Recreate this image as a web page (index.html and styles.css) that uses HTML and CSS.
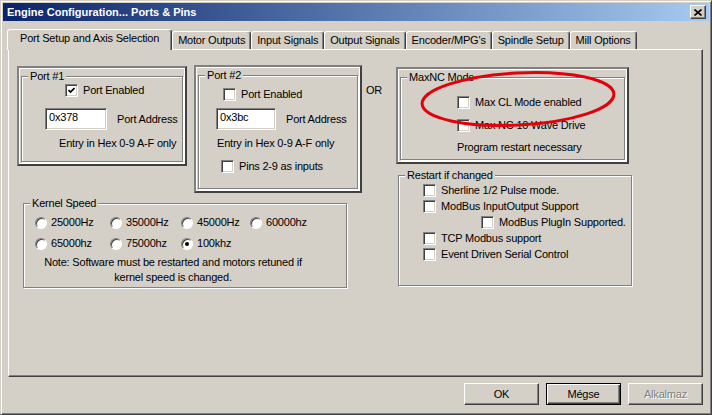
FILE: index.html
```html
<!DOCTYPE html>
<html lang="en">
<head>
    <meta charset="UTF-8">
    <title>Engine Configuration... Ports &amp; Pins</title>
    <link rel="stylesheet" href="styles.css">
</head>
<body>

<div class="window">
    <div class="titlebar">
        <span class="title">Engine Configuration... Ports &amp; Pins</span>
        <span class="close-btn">
            <svg width="8" height="7" viewBox="0 0 8 7"><path d="M0.5 0.5 L7.5 6.5 M7.5 0.5 L0.5 6.5" stroke="#000" stroke-width="1.6"/></svg>
        </span>
    </div>

    <div class="client">
        <div class="tabs">
            <div class="tab active">Port Setup and Axis Selection</div>
            <div class="tab">Motor Outputs</div>
            <div class="tab">Input Signals</div>
            <div class="tab">Output Signals</div>
            <div class="tab">Encoder/MPG's</div>
            <div class="tab">Spindle Setup</div>
            <div class="tab">Mill Options</div>
        </div>

        <div class="panel">
            <div class="col-left">
                <div class="port-row">
                    <div class="frame port1">
                        <fieldset class="group">
                            <legend>Port #1</legend>
                            <div class="check-row p1-enable">
                                <span class="check"><svg width="7" height="7" viewBox="0 0 7 7"><path d="M0.5 3 L2.5 5 L6.5 1" fill="none" stroke="#000" stroke-width="1.7"/></svg></span>
                                <span>Port Enabled</span>
                            </div>
                            <div class="addr-row p1-addr">
                                <span class="edit">0x378</span>
                                <span>Port Address</span>
                            </div>
                            <div class="p1-hint">Entry in Hex 0-9 A-F only</div>
                        </fieldset>
                    </div>

                    <div class="frame port2">
                        <fieldset class="group">
                            <legend>Port #2</legend>
                            <div class="check-row p2-enable">
                                <span class="check"></span>
                                <span>Port Enabled</span>
                            </div>
                            <div class="addr-row p2-addr">
                                <span class="edit">0x3bc</span>
                                <span>Port Address</span>
                            </div>
                            <div class="p2-hint">Entry in Hex 0-9 A-F only</div>
                            <div class="check-row p2-pins">
                                <span class="check"></span>
                                <span>Pins 2-9 as inputs</span>
                            </div>
                        </fieldset>
                    </div>

                    <div class="or-label">OR</div>
                </div>

                <fieldset class="group kernel">
                    <legend>Kernel Speed</legend>
                    <div class="radio-grid">
                        <div class="radio-item"><span class="radio"></span>25000Hz</div>
                        <div class="radio-item"><span class="radio"></span>35000Hz</div>
                        <div class="radio-item"><span class="radio"></span>45000Hz</div>
                        <div class="radio-item"><span class="radio"></span>60000hz</div>
                        <div class="radio-item"><span class="radio"></span>65000hz</div>
                        <div class="radio-item"><span class="radio"></span>75000hz</div>
                        <div class="radio-item"><span class="radio on"></span>100khz</div>
                    </div>
                    <div class="kernel-note">Note: Software must be restarted and motors retuned if<br>kernel speed is changed.</div>
                </fieldset>
            </div>

            <div class="col-right">
                <div class="frame maxnc">
                    <fieldset class="group">
                        <legend>MaxNC Mode</legend>
                        <div class="check-row m-cl">
                            <span class="check"></span>
                            <span>Max CL Mode enabled</span>
                        </div>
                        <div class="check-row m-wave">
                            <span class="check"></span>
                            <span>Max NC 10 Wave Drive</span>
                        </div>
                        <div class="m-note">Program restart necessary</div>
                    </fieldset>
                </div>

                <fieldset class="group restart">
                    <legend>Restart if changed</legend>
                    <div class="check-row r-first">
                        <span class="check"></span>
                        <span>Sherline 1/2 Pulse mode.</span>
                    </div>
                    <div class="check-row">
                        <span class="check"></span>
                        <span>ModBus InputOutput Support</span>
                    </div>
                    <div class="check-row r-plugin">
                        <span class="check"></span>
                        <span>ModBus PlugIn Supported.</span>
                    </div>
                    <div class="check-row">
                        <span class="check"></span>
                        <span>TCP Modbus support</span>
                    </div>
                    <div class="check-row">
                        <span class="check"></span>
                        <span>Event Driven Serial Control</span>
                    </div>
                </fieldset>
            </div>
        </div>

        <div class="buttons">
            <div class="btn">OK</div>
            <div class="btn default">Mégse</div>
            <div class="btn disabled">Alkalmaz</div>
        </div>
    </div>

    <!-- red marker drawn over the MaxNC box -->
    <svg class="annotation" width="712" height="415" viewBox="0 0 712 415">
        <ellipse cx="517" cy="98" rx="96" ry="26" transform="rotate(-3 517 98)" fill="none" stroke="#e3000b" stroke-width="3"/>
    </svg>
</div>

</body>
</html>
```

FILE: styles.css
```css
body {
    margin: 0;
    background-color: #d4d0c8;
    font-family: "Liberation Sans", Arial, sans-serif;
    font-size: 11px;
    line-height: 13px;
    letter-spacing: -0.2px;
    color: #000;
}
.window {
    position: relative;
    width: 712px;
    height: 415px;
    box-sizing: border-box;
    border: 1px solid;
    border-color: #d4d0c8 #404040 #404040 #d4d0c8;
    box-shadow: inset 1px 1px 0 #fff, inset -1px -1px 0 #808080;
    padding: 2px;
    background-color: #d4d0c8;
}
.titlebar {
    height: 18px;
    display: flex;
    align-items: center;
    justify-content: space-between;
    padding: 0 3px 0 4px;
    background: linear-gradient(to right, #0a246a, #a6caf0);
}
.title {
    color: #fff;
    font-weight: bold;
    letter-spacing: 0;
}
.close-btn {
    width: 16px;
    height: 14px;
    box-sizing: border-box;
    display: flex;
    align-items: center;
    justify-content: center;
    border: 1px solid;
    border-color: #fff #404040 #404040 #fff;
    box-shadow: inset -1px -1px 0 #808080;
    background-color: #d4d0c8;
}
.client {
    padding: 8px 6px 0 5px;
}

/* tabs */
.tabs {
    display: flex;
    align-items: flex-end;
    height: 21px;
    margin: 0 0 -1px -1px;
    position: relative;
    z-index: 1;
}
.tab {
    height: 18px;
    box-sizing: border-box;
    margin-bottom: 1px;
    padding: 2px 5px 0;
    border: 1px solid;
    border-bottom: 0;
    border-color: #fff #404040 transparent #fff;
    border-radius: 3px 3px 0 0;
    box-shadow: inset -1px 0 0 #808080;
    background-color: #d4d0c8;
    white-space: nowrap;
}
.tab.active {
    height: 21px;
    margin-bottom: 0;
    padding: 2px 12px 0;
}
.panel {
    display: flex;
    height: 328px;
    box-sizing: border-box;
    border: 1px solid;
    border-color: #fff #404040 #404040 #fff;
    box-shadow: inset -1px -1px 0 #808080;
    padding: 15px 0 0 8px;
}
.col-left {
    width: 379px;
    flex: none;
}
.col-right {
    width: 236px;
    flex: none;
}
.port-row {
    display: flex;
    align-items: flex-start;
}

/* raised frame round a group box */
.frame {
    flex: none;
    box-sizing: border-box;
    border: 2px solid;
    border-color: #808080 #404040 #404040 #808080;
    box-shadow: inset 1px 1px 0 #fff, inset -1px -1px 0 #fff;
    padding: 2px;
}
.frame .group {
    width: 100%;
    height: 100%;
}
.port1 {
    width: 170px;
    height: 100px;
    margin-top: 1px;
}
.port2 {
    width: 168px;
    height: 128px;
    margin-left: 7px;
}
.maxnc {
    width: 233px;
    height: 97px;
    margin-top: 2px;
}
.or-label {
    margin: 19px 0 0 4px;
}

/* etched group box */
.group {
    margin: 0;
    padding: 0;
    min-width: 0;
    box-sizing: border-box;
    border: 1px solid #808080;
    box-shadow: inset 1px 1px 0 #fff, 1px 1px 0 #fff;
}
.group legend {
    margin-left: 6px;
    padding: 0 2px;
    line-height: 13px;
    background-color: #d4d0c8;
}

/* controls */
.check-row {
    display: flex;
    align-items: center;
    gap: 5px;
    height: 13px;
    white-space: nowrap;
}
.check {
    width: 13px;
    height: 13px;
    flex: none;
    box-sizing: border-box;
    display: flex;
    align-items: center;
    justify-content: center;
    border: 1px solid;
    border-color: #808080 #fff #fff #808080;
    box-shadow: inset 1px 1px 0 #404040, inset -1px -1px 0 #d4d0c8;
    background-color: #fff;
}
.addr-row {
    display: flex;
    align-items: center;
    gap: 10px;
    white-space: nowrap;
}
.edit {
    height: 22px;
    box-sizing: border-box;
    padding: 2px 0 0 3px;
    border: 1px solid;
    border-color: #808080 #fff #fff #808080;
    box-shadow: inset 1px 1px 0 #404040, inset -1px -1px 0 #d4d0c8;
    background-color: #fff;
}
.radio {
    width: 12px;
    height: 12px;
    flex: none;
    box-sizing: border-box;
    border-radius: 50%;
    border: 1px solid;
    border-color: #808080 #fff #fff #808080;
    box-shadow: inset 1px 1px 0 #404040;
    background-color: #fff;
    display: flex;
    align-items: center;
    justify-content: center;
}
.radio.on::after {
    content: "";
    width: 4px;
    height: 4px;
    border-radius: 50%;
    background-color: #000;
}

/* port 1 */
.p1-enable { margin: 1px 0 0 43px; }
.p1-addr { margin: 11px 0 0 23px; }
.p1-addr .edit { width: 62px; }
.p1-hint { margin: 7px 0 0 37px; white-space: nowrap; }

/* port 2 */
.p2-enable { margin: 6px 0 0 24px; }
.p2-addr { margin: 7px 0 0 17px; }
.p2-addr .edit { width: 60px; }
.p2-hint { margin: 7px 0 0 18px; white-space: nowrap; }
.p2-pins { margin: 10px 0 0 22px; }

/* maxnc */
.m-cl { margin: 12px 0 0 56px; }
.m-wave { margin: 10px 0 0 56px; }
.m-note { margin: 9px 0 0 56px; white-space: nowrap; }

/* kernel speed */
.kernel {
    width: 324px;
    height: 91px;
    margin: 4px 0 0 6px;
}
.radio-grid {
    display: grid;
    grid-template-columns: 75px 71px 69px auto;
    row-gap: 8px;
    margin: 6px 0 0 11px;
}
.radio-item {
    display: flex;
    align-items: center;
    gap: 4px;
    height: 13px;
    white-space: nowrap;
}
.kernel-note {
    width: 276px;
    margin: 5px 0 0 11px;
    line-height: 15px;
    text-align: center;
    white-space: nowrap;
}

/* restart if changed */
.restart {
    width: 234px;
    height: 117px;
    margin: 5px 0 0 2px;
}
.restart .check-row {
    height: 16px;
    margin-left: 24px;
}
.restart .r-plugin {
    margin-left: 82px;
}

/* dialog buttons */
.buttons {
    display: flex;
    justify-content: flex-end;
    gap: 7px;
    margin-top: 6px;
}
.btn {
    width: 75px;
    height: 22px;
    box-sizing: border-box;
    display: flex;
    align-items: center;
    justify-content: center;
    border: 1px solid;
    border-color: #fff #404040 #404040 #fff;
    box-shadow: inset -1px -1px 0 #808080;
    background-color: #d4d0c8;
}
.btn.default {
    border-color: #000;
    box-shadow: inset 1px 1px 0 #fff, inset -1px -1px 0 #404040, inset -2px -2px 0 #808080;
}
.btn.disabled {
    color: #808080;
    text-shadow: 1px 1px 0 #fff;
}

.annotation {
    position: absolute;
    left: 0;
    top: 0;
    pointer-events: none;
}
```
